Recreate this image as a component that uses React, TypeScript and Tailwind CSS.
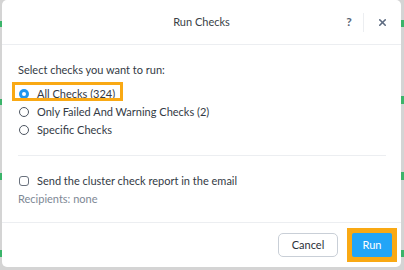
import { X } from "lucide-react";

export default function App() {
  return (
    <div className="relative w-[404px] h-[270px] bg-[#d4d4d4] overflow-hidden" style={{ fontFamily: "Lato, 'Open Sans', sans-serif" }}>
      {/* bits of the page behind the modal */}
      <div className="absolute left-0 top-[21px] w-[2px] h-[6px] bg-[#3bb46a]" />
      <div className="absolute left-0 top-[99px] w-[2px] h-[6px] bg-[#3bb46a]" />
      <div className="absolute left-0 top-[173px] w-[2px] h-[7px] bg-[#3bb46a]" />
      <div className="absolute left-0 top-[250px] w-[2px] h-[7px] bg-[#3bb46a]" />
      <div className="absolute right-0 top-[20px] w-[3px] h-[7px] bg-[#3bb46a]" />
      <div className="absolute right-0 top-[96px] w-[3px] h-[8px] bg-[#3bb46a]" />
      <div className="absolute right-0 top-[172px] w-[3px] h-[8px] bg-[#3bb46a]" />
      <div className="absolute right-0 top-[250px] w-[3px] h-[7px] bg-[#3bb46a]" />

      <div className="ml-[2px] w-[399px] h-[267px] bg-white rounded-[5px] flex flex-col text-[#333a45] text-[11px]">
        {/* header */}
        <div className="h-[45px] shrink-0 flex items-center border-b border-[#eceef1] relative">
          <div className="flex-1 text-center text-[11px] text-[#3a3f47]">Run Checks</div>
          <div className="absolute right-0 top-0 h-full flex items-center">
            <span className="w-[16px] text-center text-[12px] font-bold text-[#5a6474]">?</span>
            <div className="w-px h-[19px] bg-[#eceef1] ml-[6px]" />
            <div className="w-[37px] flex justify-center">
              <X size={11} strokeWidth={3.4} className="text-[#5d6b80]" />
            </div>
          </div>
        </div>

        {/* body */}
        <div className="px-[16px] pt-[17px]">
          <div className="h-[16px] leading-[16px]">Select checks you want to run:</div>
          <div className="mt-[7px] flex flex-col">
            <div className="relative flex items-center h-[18px] pl-[1px]">
              <div className="absolute left-[-6px] top-[-3px] w-[111px] h-[19px] border-[3px] border-[#f9a914]" />
              <span className="w-[10px] h-[10px] rounded-full bg-[#1f96ef] flex items-center justify-center">
                <span className="w-[4px] h-[4px] rounded-full bg-white" />
              </span>
              <span className="ml-[8px]">All Checks (324)</span>
            </div>
            <div className="flex items-center h-[18px] pl-[1px]">
              <span className="w-[10px] h-[10px] rounded-full border border-[#4d5561]" />
              <span className="ml-[8px]">Only Failed And Warning Checks (2)</span>
            </div>
            <div className="flex items-center h-[18px] pl-[1px]">
              <span className="w-[10px] h-[10px] rounded-full border border-[#4d5561]" />
              <span className="ml-[8px]">Specific Checks</span>
            </div>
          </div>
          <div className="mt-[16px] h-px bg-[#eceef1] w-[368px]" />
          <div className="mt-[17px] flex items-center h-[16px] pl-[1px]">
            <span className="w-[10px] h-[10px] rounded-[3px] border border-[#69717d]" />
            <span className="ml-[8px]">Send the cluster check report in the email</span>
          </div>
          <div className="mt-[2px] h-[16px] leading-[16px] text-[#7e8895]">Recipients: none</div>
        </div>

        {/* footer */}
        <div className="mt-auto h-[45px] shrink-0 border-t border-[#eceef1] flex items-center justify-end pr-[4px] gap-[9px]">
          <button className="w-[60px] h-[24px] rounded-[5px] border border-[#c9cfd7] text-[11px] text-[#2b3038]">Cancel</button>
          <div className="w-[50px] h-[34px] bg-[#f9a914] flex items-center justify-center">
            <button className="w-[40px] h-[24px] bg-[#22a5f7] rounded-[2px] text-white text-[11px]">Run</button>
          </div>
        </div>
      </div>
    </div>
  );
}
